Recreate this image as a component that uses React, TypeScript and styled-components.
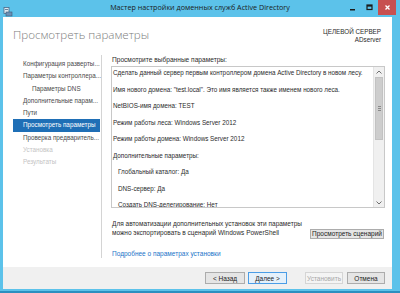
import styled, { createGlobalStyle } from 'styled-components'

const GlobalStyle = createGlobalStyle`
  html, body {
    margin: 0;
    padding: 0;
    background: #ffffff;
  }
  body {
    font-family: 'Liberation Sans', 'Noto Sans', sans-serif;
  }
`

const navItems = [
  { label: 'Конфигурация разверты...', indent: false, state: 'normal' },
  { label: 'Параметры контроллера...', indent: false, state: 'normal' },
  { label: 'Параметры DNS', indent: true, state: 'normal' },
  { label: 'Дополнительные парам...', indent: false, state: 'normal' },
  { label: 'Пути', indent: false, state: 'normal' },
  { label: 'Просмотреть параметры', indent: false, state: 'active' },
  { label: 'Проверка предваритель...', indent: false, state: 'normal' },
  { label: 'Установка', indent: false, state: 'disabled' },
  { label: 'Результаты', indent: false, state: 'disabled' },
]

const summary = [
  { text: 'Сделать данный сервер первым контроллером домена Active Directory в новом лесу.', indent: false },
  { text: 'Имя нового домена: "test.local". Это имя является также именем нового леса.', indent: false },
  { text: 'NetBIOS-имя домена: TEST', indent: false },
  { text: 'Режим работы леса: Windows Server 2012', indent: false },
  { text: 'Режим работы домена: Windows Server 2012', indent: false },
  { text: 'Дополнительные параметры:', indent: false },
  { text: 'Глобальный каталог: Да', indent: true },
  { text: 'DNS-сервер: Да', indent: true },
  { text: 'Создать DNS-делегирование: Нет', indent: true },
]

const Window = styled.div`
  width: 400px;
  height: 293px;
  box-sizing: border-box;
  display: flex;
  flex-direction: column;
  background: #5cc2ea;
  border-bottom: 2px solid #2c8fbf;
`

const TitleBar = styled.div`
  height: 17px;
  display: flex;
  align-items: flex-start;
  position: relative;
  padding-left: 3px;
`

const AppIcon = styled.div`
  width: 10px;
  height: 10px;
  margin-top: 3px;
`

const Title = styled.div`
  position: absolute;
  left: 0;
  right: 0;
  top: 2px;
  text-align: center;
  font-family: 'Open Sans', sans-serif;
  font-size: 7.2px;
  color: #1b1b1b;
  line-height: 11px;
`

const Controls = styled.div`
  margin-left: auto;
  margin-right: 4px;
  display: flex;
  height: 15px;
`

const Ctrl = styled.div<{ $close?: boolean }>`
  width: ${(p) => (p.$close ? '18px' : '17px')};
  height: 15px;
  display: flex;
  align-items: center;
  justify-content: center;
  background: ${(p) => (p.$close ? '#c75050' : 'transparent')};
`

const Frame = styled.div`
  flex: 1;
  margin: 0 8px 2px 3px;
  background: #ffffff;
  display: flex;
  flex-direction: column;
`

const Header = styled.div`
  height: 38px;
  display: flex;
  justify-content: space-between;
  padding: 8px 11px 0 10px;
  box-sizing: border-box;
`

const Heading = styled.div`
  font-family: 'Open Sans', sans-serif;
  font-size: 11.6px;
  font-weight: 300;
  color: #7d7d7d;
  line-height: 20px;
`

const Target = styled.div`
  font-size: 6.3px;
  color: #2a2a2a;
  text-align: right;
  line-height: 8px;
  padding-top: 3px;
`

const Main = styled.div`
  flex: 1;
  display: flex;
`

const Nav = styled.div`
  width: 99px;
  padding: 3px 0 0 10px;
  border-right: 1px solid #d4d4d4;
  margin-bottom: 9px;
  box-sizing: border-box;
`

const NavItem = styled.div<{ $indent?: boolean; $state: string }>`
  height: 12.3px;
  line-height: 12.3px;
  font-size: 6.3px;
  white-space: nowrap;
  padding-left: ${(p) => (p.$indent ? '19px' : '10px')};
  margin-right: 1px;
  background: ${(p) => (p.$state === 'active' ? '#1f6fb6' : 'transparent')};
  color: ${(p) =>
    p.$state === 'active' ? '#ffffff' : p.$state === 'disabled' ? '#c4c4c4' : '#4a4a4a'};
`

const Content = styled.div`
  flex: 1;
  padding: 0 0 0 9px;
  display: flex;
  flex-direction: column;
`

const Caption = styled.div`
  font-size: 6.6px;
  color: #2b2b2b;
  line-height: 10px;
  padding-left: 1px;
`

const Box = styled.div`
  margin-top: 1px;
  height: 142px;
  width: 274px;
  border: 1px solid #c8c8c8;
  display: flex;
  box-sizing: border-box;
`

const BoxText = styled.div`
  flex: 1;
  padding: 1px 0 0 1px;
  overflow: hidden;
`

const Line = styled.div<{ $indent?: boolean }>`
  font-size: 6.3px;
  color: #2b2b2b;
  height: 16.5px;
  line-height: 10px;
  white-space: nowrap;
  padding-left: ${(p) => (p.$indent ? '5px' : '0')};
`

const Scroll = styled.div`
  width: 10px;
  border-left: 1px solid #e4e4e4;
  background: #f0f0f0;
  display: flex;
  flex-direction: column;
  align-items: center;
`

const Arrow = styled.div`
  height: 9px;
  display: flex;
  align-items: center;
  justify-content: center;
`

const Thumb = styled.div`
  margin-top: 1px;
  width: 8px;
  height: 63px;
  background: #cdcdcd;
  border: 1px solid #c2c2c2;
  box-sizing: border-box;
  display: flex;
  align-items: center;
  justify-content: center;
`

const Grip = styled.div`
  width: 3px;
  height: 5px;
  background: repeating-linear-gradient(to bottom, #8a8a8a 0 1px, transparent 1px 2px);
`

const Spacer = styled.div`
  flex: 1;
`

const ExportRow = styled.div`
  display: flex;
  align-items: flex-end;
  margin-top: 12px;
  width: 274px;
`

const ExportText = styled.div`
  flex: 1;
  font-size: 6.5px;
  color: #2b2b2b;
  line-height: 8.5px;
  padding-left: 1px;
  white-space: nowrap;
`

const SmallButton = styled.div`
  font-size: 6.5px;
  color: #1b1b1b;
  width: 74px;
  height: 10px;
  line-height: 8px;
  text-align: center;
  white-space: nowrap;
  box-sizing: border-box;
  border: 1px solid #acacac;
  background: #e5e5e5;
  margin-right: 1px;
  margin-bottom: -2px;
`

const Link = styled.div`
  margin-top: 12px;
  font-size: 6.5px;
  color: #1a73c8;
  line-height: 10px;
  padding-left: 1px;
`

const Footer = styled.div`
  height: 22px;
  background: #f0f0f0;
  display: flex;
  align-items: center;
  justify-content: flex-end;
  padding-right: 7px;
`

const Btn = styled.div<{ $primary?: boolean; $disabled?: boolean; $gap?: number; $w?: number }>`
  width: ${(p) => p.$w ?? 39}px;
  height: 12px;
  box-sizing: border-box;
  display: flex;
  align-items: center;
  justify-content: center;
  font-size: 6.5px;
  margin-left: ${(p) => p.$gap ?? 3}px;
  border: 1px solid ${(p) => (p.$primary ? '#4b9de6' : p.$disabled ? '#d5d5d5' : '#acacac')};
  background: ${(p) => (p.$primary ? '#e5f1fb' : p.$disabled ? '#f4f4f4' : '#e5e5e5')};
  color: ${(p) => (p.$disabled ? '#a8a8a8' : '#1b1b1b')};
`

export default function App() {
  return (
    <>
      <GlobalStyle />
      <Window>
        <TitleBar>
          <AppIcon>
            <svg width="10" height="10" viewBox="0 0 10 10">
              <rect x="1" y="0.5" width="5" height="6" fill="#dfe9f2" stroke="#4a6a88" strokeWidth="0.8" />
              <rect x="3" y="5" width="6" height="4" fill="#6a8fb5" stroke="#3d5a78" strokeWidth="0.6" />
              <rect x="2" y="2" width="3" height="0.8" fill="#4a6a88" />
            </svg>
          </AppIcon>
          <Title>Мастер настройки доменных служб Active Directory</Title>
          <Controls>
            <Ctrl>
              <svg width="7" height="7" viewBox="0 0 7 7">
                <rect x="1" y="5" width="5" height="1.5" fill="#1b1b1b" />
              </svg>
            </Ctrl>
            <Ctrl>
              <svg width="7" height="7" viewBox="0 0 7 7">
                <rect x="1" y="1" width="5" height="4.5" fill="none" stroke="#1b1b1b" strokeWidth="1.2" />
                <rect x="1" y="1" width="5" height="1.6" fill="#1b1b1b" />
              </svg>
            </Ctrl>
            <Ctrl $close>
              <svg width="7" height="7" viewBox="0 0 7 7">
                <path d="M1.5 1.5 L5.5 5.5 M5.5 1.5 L1.5 5.5" stroke="#ffffff" strokeWidth="1.3" />
              </svg>
            </Ctrl>
          </Controls>
        </TitleBar>
        <Frame>
          <Header>
            <Heading>Просмотреть параметры</Heading>
            <Target>
              ЦЕЛЕВОЙ СЕРВЕР
              <br />
              ADserver
            </Target>
          </Header>
          <Main>
            <Nav>
              {navItems.map((item, i) => (
                <NavItem key={i} $indent={item.indent} $state={item.state}>
                  {item.label}
                </NavItem>
              ))}
            </Nav>
            <Content>
              <Caption>Просмотрите выбранные параметры:</Caption>
              <Box>
                <BoxText>
                  {summary.map((l, i) => (
                    <Line key={i} $indent={l.indent}>
                      {l.text}
                    </Line>
                  ))}
                </BoxText>
                <Scroll>
                  <Arrow>
                    <svg width="6" height="4" viewBox="0 0 6 4">
                      <path d="M0.5 3.5 L3 1 L5.5 3.5" fill="none" stroke="#606060" strokeWidth="0.9" />
                    </svg>
                  </Arrow>
                  <Thumb>
                    <Grip />
                  </Thumb>
                  <Spacer />
                  <Arrow>
                    <svg width="6" height="4" viewBox="0 0 6 4">
                      <path d="M0.5 0.5 L3 3 L5.5 0.5" fill="none" stroke="#606060" strokeWidth="0.9" />
                    </svg>
                  </Arrow>
                </Scroll>
              </Box>
              <ExportRow>
                <ExportText>
                  Для автоматизации дополнительных установок эти параметры
                  <br />
                  можно экспортировать в сценарий Windows PowerShell
                </ExportText>
                <SmallButton>Просмотреть сценарий</SmallButton>
              </ExportRow>
              <Link>Подробнее о параметрах установки</Link>
            </Content>
          </Main>
          <Footer>
            <Btn $w={40}>&lt; Назад</Btn>
            <Btn $primary>Далее &gt;</Btn>
            <Btn $disabled $gap={18} $w={38}>
              Установить
            </Btn>
            <Btn $w={38} $gap={4}>
              Отмена
            </Btn>
          </Footer>
        </Frame>
      </Window>
    </>
  )
}
